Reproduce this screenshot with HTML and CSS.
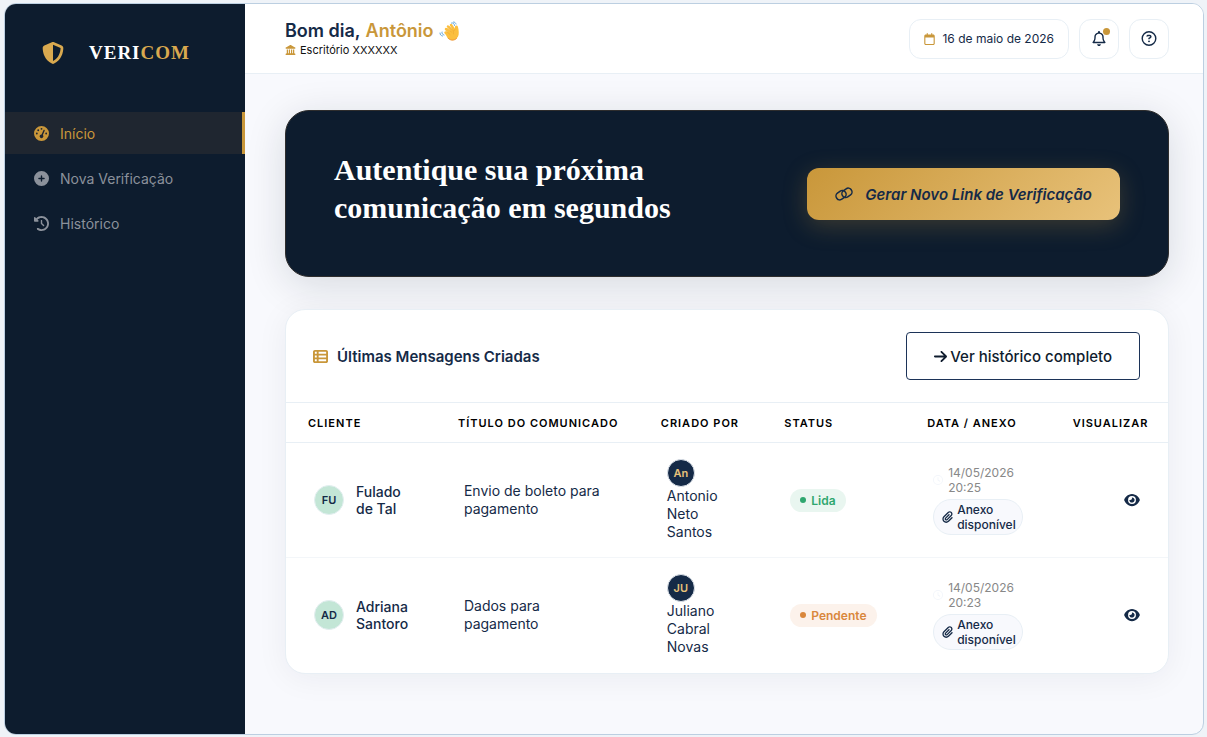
FILE: index.html
```
<!DOCTYPE html>
<html lang="pt-BR">
<head>
    <meta charset="UTF-8">
    <meta name="viewport" content="width=device-width, initial-scale=1.0">
    <title>Vericom - Início</title>
    <link rel="stylesheet" href="styles.css">
</head>
<body>

<!-- Ícones reutilizados nas linhas da tabela -->
<svg class="sprite" aria-hidden="true">
    <symbol id="i-clock" viewBox="0 0 512 512"><path d="M464 256A208 208 0 1 1 48 256a208 208 0 1 1 416 0zM0 256a256 256 0 1 0 512 0A256 256 0 1 0 0 256zM232 120V256c0 8 4 15.500 10.700 20l96 64c11 7.400 25.900 4.400 33.300-6.700s4.400-25.900-6.700-33.300L280 243.200V120c0-13.300-10.700-24-24-24s-24 10.700-24 24z"/></symbol>
    <symbol id="i-clip" viewBox="0 0 448 512"><path d="M364.200 83.800c-24.400-24.400-64-24.400-88.400 0l-184 184c-42.100 42.100-42.100 110.300 0 152.400s110.300 42.100 152.400 0l152-152c10.900-10.900 28.700-10.900 39.600 0s10.900 28.700 0 39.600l-152 152c-64 64-167.600 64-231.600 0s-64-167.600 0-231.600l184-184c46.300-46.300 121.300-46.300 167.600 0s46.300 121.300 0 167.600l-176 176c-28.600 28.600-75 28.600-103.600 0s-28.600-75 0-103.600l144-144c10.900-10.900 28.700-10.900 39.600 0s10.900 28.700 0 39.600l-144 144c-6.700 6.700-6.700 17.700 0 24.400s17.700 6.700 24.400 0l176-176c24.400-24.400 24.400-64 0-88.400z"/></symbol>
    <symbol id="i-eye" viewBox="0 0 576 512"><path d="M288 32c-80.800 0-145.500 36.800-192.600 80.600C48.600 156 17.300 208 2.500 243.700c-3.300 7.900-3.300 16.700 0 24.600C17.300 304 48.600 356 95.400 399.400C142.500 443.200 207.200 480 288 480s145.500-36.800 192.600-80.600c46.800-43.500 78.100-95.400 93-131.100c3.300-7.900 3.300-16.700 0-24.600c-14.900-35.700-46.200-87.700-93-131.100C433.500 68.800 368.800 32 288 32zM144 256a144 144 0 1 1 288 0 144 144 0 1 1 -288 0zm144-64c0 35.300-28.700 64-64 64c-7.100 0-13.900-1.200-20.300-3.300c-5.500-1.800-11.900 1.600-11.700 7.400c.3 6.900 1.300 13.800 3.200 20.700c13.700 51.200 66.400 81.600 117.600 67.900s81.600-66.400 67.900-117.600c-11.100-41.500-47.800-69.400-88.600-71.100c-5.800-.2-9.200 6.100-7.400 11.700c2.100 6.400 3.300 13.200 3.300 20.300z"/></symbol>
</svg>

<div class="app">
    <aside class="sidebar">
        <div class="brand">
            <svg class="brand-icon" viewBox="0 0 512 512" aria-hidden="true"><path d="M256 0c4.600 0 9.200 1 13.400 2.900L457.700 82.800c22 9.300 38.400 31 38.300 57.200c-.5 99.200-41.300 280.700-213.600 363.200c-16.700 8-36.100 8-52.800 0C57.300 420.700 16.500 239.200 16 140c-.1-26.200 16.300-47.900 38.300-57.200L242.700 2.900C246.800 1 251.400 0 256 0zm0 66.800V444.800C394 378 431.100 230.100 432 141.400L256 66.800z"/></svg>
            <span class="brand-name">VERI<span>COM</span></span>
        </div>
        <nav class="menu">
            <a href="#" class="menu-item active">
                <svg viewBox="0 0 512 512" aria-hidden="true"><path d="M0 256a256 256 0 1 1 512 0A256 256 0 1 1 0 256zM288 96a32 32 0 1 0 -64 0 32 32 0 1 0 64 0zM256 416c35.300 0 64-28.700 64-64c0-17.400-6.900-33.100-18.100-44.600L366 161.700c5.300-12.100-.2-26.300-12.300-31.600s-26.300 .2-31.600 12.300L257.900 288c-.6 0-1.300 0-1.900 0c-35.300 0-64 28.700-64 64s28.700 64 64 64zM176 144a32 32 0 1 0 -64 0 32 32 0 1 0 64 0zM96 288a32 32 0 1 0 0-64 32 32 0 1 0 0 64zm352-32a32 32 0 1 0 -64 0 32 32 0 1 0 64 0z"/></svg>
                Início
            </a>
            <a href="#" class="menu-item">
                <svg viewBox="0 0 512 512" aria-hidden="true"><path d="M256 512A256 256 0 1 0 256 0a256 256 0 1 0 0 512zM232 344V280H168c-13.300 0-24-10.700-24-24s10.700-24 24-24h64V168c0-13.300 10.700-24 24-24s24 10.700 24 24v64h64c13.300 0 24 10.700 24 24s-10.700 24-24 24H280v64c0 13.300-10.700 24-24 24s-24-10.700-24-24z"/></svg>
                Nova Verificação
            </a>
            <a href="#" class="menu-item">
                <svg viewBox="0 0 512 512" aria-hidden="true"><path d="M75 75L41 41C25.900 25.900 0 36.600 0 57.900V168c0 13.300 10.700 24 24 24H134.100c21.400 0 32.100-25.900 17-41l-30.800-30.800C155 85.500 203 64 256 64c106 0 192 86 192 192s-86 192-192 192c-40.800 0-78.600-12.700-109.700-34.400c-14.500-10.100-34.400-6.600-44.600 7.900s-6.600 34.400 7.900 44.600C151.200 495 201.700 512 256 512c141.400 0 256-114.600 256-256S397.400 0 256 0C185.300 0 121.300 28.700 75 75zm181 53c-13.300 0-24 10.700-24 24V256c0 6.400 2.500 12.500 7 17l72 72c9.400 9.400 24.600 9.400 33.900 0s9.400-24.600 0-33.900l-65-65V152c0-13.300-10.700-24-24-24z"/></svg>
                Histórico
            </a>
        </nav>
    </aside>

    <div class="main">
        <header class="topbar">
            <div class="greeting">
                <h1>Bom dia, <span>Antônio</span>
                    <svg class="wave" viewBox="0 0 40 40" aria-hidden="true">
                        <g fill="none" stroke="#fbbf3f" stroke-width="5" stroke-linecap="round">
                            <path d="M14 16l12 10M18 11l11 12M24 8l8 12M13 23l9 8"/>
                        </g>
                        <path fill="#fbbf3f" d="M16 22l16-5c-1-5 0-8 3-8s3 4 4 8c1 8 1 14-4 18-6 5-13 4-18-1l-4-8z"/>
                        <path fill="none" stroke="#ee9636" stroke-width="2" stroke-linecap="round" d="M19 35c5 5 12 4 16 0"/>
                        <g fill="none" stroke="#e9a12f" stroke-linecap="round">
                            <path d="M17 15l8 7M21 11l7 8M14 20l8 7M32 17c-4 2-4 6-3 9"/>
                        </g>
                        <g fill="none" stroke="#62a5dc" stroke-width="2" stroke-linecap="round">
                            <path d="M25 4c3-1 6 1 6 5M29 2c3 0 4 2 5 4M6 22c-1 3 1 5 4 6M2 24c0 4 2 5 5 6"/>
                        </g>
                    </svg>
                </h1>
                <p>
                    <svg viewBox="0 0 512 512" aria-hidden="true"><path d="M240.100 4.200c9.800-5.600 21.900-5.600 31.800 0l171.800 98.100L448 104l0 .9 47.900 27.400c12.600 7.200 18.800 22 15.100 36s-16.400 23.800-30.900 23.800H32c-14.500 0-27.200-9.800-30.900-23.800s2.500-28.800 15.100-36L64 104.900V104l4.400-1.600L240.100 4.200zM64 224h64V416h40V224h64V416h48V224h64V416h40V224h64V420.300c.6 .3 1.200 .7 1.800 1.100l48 32c11.700 7.800 17 22.400 12.900 35.900S494.100 512 480 512H32c-14.100 0-26.500-9.200-30.600-22.700s1.100-28.100 12.900-35.900l48-32c.6-.4 1.200-.7 1.800-1.100V224z"/></svg>
                    Escritório XXXXXX
                </p>
            </div>
            <div class="tools">
                <div class="date">
                    <svg viewBox="0 0 448 512" aria-hidden="true"><path d="M152 24c0-13.300-10.700-24-24-24s-24 10.700-24 24V64H64C28.700 64 0 92.700 0 128v16 48V448c0 35.300 28.700 64 64 64H384c35.300 0 64-28.700 64-64V192 144 128c0-35.300-28.700-64-64-64H344V24c0-13.300-10.700-24-24-24s-24 10.700-24 24V64H152V24zM48 192H400V448c0 8.800-7.200 16-16 16H64c-8.800 0-16-7.200-16-16V192z"/></svg>
                    16 de maio de 2026
                </div>
                <button type="button" class="icon-btn" aria-label="Notificações">
                    <svg viewBox="0 0 448 512" aria-hidden="true"><path d="M224 0c-17.700 0-32 14.300-32 32V49.900C119.500 61.400 64 124.200 64 200v33.400c0 45.400-15.500 89.500-43.800 124.900L5.300 377c-5.800 7.200-6.900 17.100-2.900 25.400S14.800 416 24 416H424c9.200 0 17.600-5.300 21.600-13.600s2.900-18.200-2.900-25.400l-14.900-18.600C399.500 322.900 384 278.800 384 233.400V200c0-75.800-55.500-138.600-128-150.100V32c0-17.700-14.300-32-32-32zm0 96h8c57.400 0 104 46.600 104 104v33.400c0 47.900 13.900 94.600 39.700 134.600H72.300C98.100 328 112 281.300 112 233.400V200c0-57.400 46.600-104 104-104h8zm64 352H224 160c0 17 6.700 33.300 18.700 45.300s28.300 18.700 45.300 18.700s33.300-6.700 45.300-18.700s18.700-28.300 18.700-45.300z"/></svg>
                    <span class="badge"></span>
                </button>
                <button type="button" class="icon-btn" aria-label="Ajuda">
                    <svg viewBox="0 0 512 512" aria-hidden="true"><path d="M464 256A208 208 0 1 0 48 256a208 208 0 1 0 416 0zM0 256a256 256 0 1 1 512 0A256 256 0 1 1 0 256zm169.800-90.700c7.900-22.300 29.100-37.300 52.800-37.300h58.300c34.900 0 63.100 28.300 63.100 63.100c0 22.600-12.100 43.500-31.700 54.800L280 264.400c-.2 13-10.900 23.600-24 23.600c-13.300 0-24-10.700-24-24V250.500c0-8.600 4.600-16.500 12.100-20.800l44.300-25.400c4.700-2.700 7.600-7.700 7.600-13.100c0-8.400-6.800-15.100-15.100-15.100H222.600c-3.400 0-6.400 2.100-7.500 5.300l-.4 1.200c-4.400 12.500-18.200 19-30.600 14.600s-19-18.200-14.600-30.600l.4-1.200zM224 352a32 32 0 1 1 64 0 32 32 0 1 1 -64 0z"/></svg>
                </button>
            </div>
        </header>

        <main class="content">
            <section class="hero">
                <h2>Autentique sua próxima comunicação em segundos</h2>
                <button type="button" class="cta">
                    <svg viewBox="0 0 36 30" aria-hidden="true">
                        <rect x="2" y="9" width="21" height="15" rx="7" transform="rotate(-36 12 17)"/>
                        <rect x="13" y="4" width="21" height="15" rx="7" transform="rotate(-36 24 11)"/>
                    </svg>
                    Gerar Novo Link de Verificação
                </button>
            </section>

            <section class="card">
                <div class="card-header">
                    <h3>
                        <svg viewBox="0 0 512 512" aria-hidden="true"><path d="M0 96C0 60.700 28.700 32 64 32H448c35.300 0 64 28.700 64 64V416c0 35.300-28.700 64-64 64H64c-35.300 0-64-28.700-64-64V96zm64 0v64h64V96H64zm384 0H192v64H448V96zM64 224v64h64V224H64zm384 0H192v64H448V224zM64 352v64h64V352H64zm384 0H192v64H448V352z"/></svg>
                        Últimas Mensagens Criadas
                    </h3>
                    <a href="#" class="history-link">
                        <svg viewBox="0 0 448 512" aria-hidden="true"><path d="M438.600 278.600c12.500-12.500 12.500-32.800 0-45.300l-160-160c-12.500-12.500-32.800-12.500-45.300 0s-12.500 32.800 0 45.300L338.800 224 32 224c-17.700 0-32 14.300-32 32s14.300 32 32 32l306.700 0L233.400 393.400c-12.500 12.500-12.500 32.800 0 45.300s32.800 12.500 45.300 0l160-160z"/></svg>
                        Ver histórico completo
                    </a>
                </div>
                <table>
                    <thead>
                        <tr>
                            <th class="col-client">Cliente</th>
                            <th class="col-title">Título do comunicado</th>
                            <th class="col-author">Criado por</th>
                            <th class="col-status">Status</th>
                            <th class="col-date">Data / Anexo</th>
                            <th class="col-view">Visualizar</th>
                        </tr>
                    </thead>
                    <tbody>
                        <tr>
                            <td><div class="client"><span class="avatar">FU</span><strong>Fulado de Tal</strong></div></td>
                            <td>Envio de boleto para pagamento</td>
                            <td><span class="author">An</span>Antonio Neto Santos</td>
                            <td><span class="status read">Lida</span></td>
                            <td>
                                <div class="when"><svg><use href="#i-clock"/></svg><span>14/05/2026 20:25</span></div>
                                <div class="file"><svg><use href="#i-clip"/></svg><span>Anexo disponível</span></div>
                            </td>
                            <td><a href="#" class="view" aria-label="Visualizar mensagem de Fulado de Tal"><svg><use href="#i-eye"/></svg></a></td>
                        </tr>
                        <tr>
                            <td><div class="client"><span class="avatar">AD</span><strong>Adriana Santoro</strong></div></td>
                            <td>Dados para pagamento</td>
                            <td><span class="author">JU</span>Juliano Cabral Novas</td>
                            <td><span class="status pending">Pendente</span></td>
                            <td>
                                <div class="when"><svg><use href="#i-clock"/></svg><span>14/05/2026 20:23</span></div>
                                <div class="file"><svg><use href="#i-clip"/></svg><span>Anexo disponível</span></div>
                            </td>
                            <td><a href="#" class="view" aria-label="Visualizar mensagem de Adriana Santoro"><svg><use href="#i-eye"/></svg></a></td>
                        </tr>
                    </tbody>
                </table>
            </section>
        </main>
    </div>
</div>

</body>
</html>
```
FILE: styles.css
```
* { box-sizing: border-box; margin: 0; padding: 0; }

:root {
    --navy: #0d1c2e;
    --ink: #152a47;
    --gold: #c9973a;
    --line: #e8eff5;
}

body {
    font-family: Inter, "Open Sans", sans-serif;
    font-size: 14px;
    color: var(--ink);
    background: #eff3f8;
    min-height: 100vh;
    padding: 3px 3px 2px 4px;
    display: flex;
}

a { color: inherit; text-decoration: none; }
button { font: inherit; color: inherit; cursor: pointer; }
svg { fill: currentColor; flex-shrink: 0; }
.sprite { display: none; }

.app {
    flex: 1;
    display: flex;
    border: 1px solid #bccfe1;
    border-radius: 12px;
    overflow: hidden;
    background: #f8f9fd;
}

/* Menu lateral */
.sidebar {
    width: 240px;
    flex-shrink: 0;
    background: var(--navy);
}
.brand {
    display: flex;
    align-items: center;
    gap: 25px;
    height: 108px;
    padding: 0 37px 10px;
}
.brand-icon { width: 22px; height: 22px; color: #d9a94f; }
.brand-name {
    font-family: "Liberation Serif", serif;
    font-size: 19px;
    font-weight: bold;
    letter-spacing: 1px;
    color: #fff;
}
.brand-name span { color: #d9a94f; }
.menu {
    display: flex;
    flex-direction: column;
    gap: 3px;
}
.menu-item {
    display: flex;
    align-items: center;
    gap: 11px;
    height: 42px;
    padding-left: 29px;
    color: #8b919b;
}
.menu-item svg { width: 15px; height: 15px; }
.menu-item.active {
    color: var(--gold);
    background: #1f2630;
    border-right: 3px solid var(--gold);
}

.main {
    flex: 1;
    min-width: 0;
}

/* Barra do topo */
.topbar {
    display: flex;
    align-items: center;
    justify-content: space-between;
    height: 70px;
    padding: 0 34px 0 40px;
    background: #fff;
    border-bottom: 1px solid var(--line);
}
.greeting { padding-top: 1px; }
.greeting h1 {
    display: flex;
    align-items: center;
    gap: 5px;
    font-size: 18px;
    line-height: 22px;
    font-weight: 600;
}
.greeting h1 span { color: var(--gold); }
.wave { width: 20px; height: 20px; }
.greeting p {
    display: flex;
    align-items: center;
    gap: 4px;
    font-size: 11px;
    line-height: 16px;
    color: #111;
}
.greeting p svg { width: 11px; height: 10px; color: var(--gold); }
.tools {
    display: flex;
    gap: 10px;
}
.date, .icon-btn {
    display: flex;
    align-items: center;
    justify-content: center;
    height: 40px;
    background: #fff;
    border: 1px solid var(--line);
    border-radius: 12px;
}
.date {
    gap: 7px;
    padding: 0 14px;
    font-size: 12px;
}
.date svg { width: 11px; height: 12px; color: var(--gold); }
.icon-btn {
    position: relative;
    width: 40px;
}
.icon-btn svg { width: 16px; height: 15px; }
.badge {
    position: absolute;
    top: 8px;
    right: 8px;
    width: 7px;
    height: 7px;
    border-radius: 50%;
    background: var(--gold);
}

.content {
    display: flex;
    flex-direction: column;
    gap: 32px;
    padding: 36px 34px 32px 40px;
}

/* Chamada principal */
.hero {
    display: flex;
    align-items: center;
    justify-content: space-between;
    padding: 40px 48px 39px;
    background: var(--navy);
    border: 1px solid #2e2d2d;
    border-radius: 24px;
    box-shadow: 0 8px 40px rgba(13, 28, 46, 0.14);
}
.hero h2 {
    max-width: 380px;
    margin-bottom: 10px;
    font-family: "Liberation Serif", serif;
    font-size: 30px;
    line-height: 38px;
    color: #fff;
}
.cta {
    display: flex;
    align-items: center;
    gap: 12px;
    height: 52px;
    padding: 0 28px;
    border: 0;
    border-radius: 12px;
    background: linear-gradient(135deg, #c9973a, #e8c27a);
    box-shadow: 0 6px 24px rgba(201, 151, 58, 0.25);
    font-size: 15px;
    font-weight: 600;
    font-style: italic;
}
.cta svg {
    width: 18px;
    height: 15px;
    overflow: visible;
    fill: none;
    stroke: currentColor;
    stroke-width: 3px;
}

/* Últimas mensagens */
.card {
    background: #fff;
    border: 1px solid var(--line);
    border-radius: 20px;
    overflow: hidden;
    box-shadow: 0 4px 32px rgba(13, 28, 46, 0.06);
}
.card-header {
    display: flex;
    align-items: center;
    justify-content: space-between;
    height: 92px;
    padding: 0 28px 0 27px;
}
.card-header h3 {
    display: flex;
    align-items: center;
    gap: 9px;
    font-size: 15px;
    font-weight: 600;
}
.card-header h3 svg { width: 15px; height: 15px; color: var(--gold); }
.history-link {
    display: flex;
    align-items: center;
    gap: 3px;
    height: 48px;
    padding: 0 27px;
    border: 1px solid #1c3358;
    border-radius: 4px;
    font-size: 15px;
    font-weight: 500;
    color: #0f1c2e;
}
.history-link svg { width: 13px; height: 15px; }

table {
    width: 100%;
    table-layout: fixed;
    border-collapse: collapse;
}
th {
    height: 40px;
    padding: 0 0 0 22px;
    border-top: 1px solid var(--line);
    border-bottom: 1px solid var(--line);
    font-size: 11px;
    font-weight: 600;
    letter-spacing: 1px;
    text-align: left;
    text-transform: uppercase;
    white-space: nowrap;
    color: #000;
}
.col-client { width: 17%; }
.col-title { width: 23%; }
.col-author { width: 14%; }
.col-status { width: 16.2%; }
.col-date { width: 16.5%; }
.col-view { width: 13.3%; }
td {
    height: 115px;
    padding: 16px 28px;
    line-height: 18px;
    vertical-align: middle;
}
tbody tr + tr td { border-top: 1px solid #f3f6f9; }

.client {
    display: flex;
    align-items: center;
    gap: 12px;
}
.client strong {
    font-size: 14px;
    line-height: 17px;
    font-weight: 500;
}
.avatar, .author {
    display: flex;
    align-items: center;
    justify-content: center;
    flex-shrink: 0;
    border-radius: 50%;
    font-size: 11px;
    font-weight: 600;
}
.avatar {
    width: 30px;
    height: 30px;
    border: 1px solid #e3eef0;
    background: #c3e6d6;
}
.author {
    width: 28px;
    height: 28px;
    border: 1px solid #dde3ea;
    background: #152a47;
    color: #e8c27a;
}
.status {
    display: inline-flex;
    align-items: center;
    gap: 5px;
    padding: 0 10px;
    border-radius: 12px;
    font-size: 12px;
    line-height: 23px;
    font-weight: 600;
}
.status::before {
    content: "";
    width: 6px;
    height: 6px;
    border-radius: 50%;
    background: currentColor;
}
.read { background: #e9f6f0; color: #2fa76f; }
.pending { background: #fcf2eb; color: #d9873c; }

.when, .file {
    display: flex;
    align-items: center;
    gap: 5px;
    font-size: 12px;
    line-height: 15px;
}
.when { color: #888; }
.when svg { width: 10px; height: 10px; color: #f3f6fb; }
.file {
    gap: 4px;
    margin-top: 4px;
    padding: 2px 8px;
    border: 1px solid var(--line);
    border-radius: 18px;
    background: #f8f9fd;
    font-weight: 500;
}
.file svg { width: 11px; height: 12px; }

.view {
    display: flex;
    justify-content: flex-end;
}
.view svg { width: 16px; height: 14px; }
```
